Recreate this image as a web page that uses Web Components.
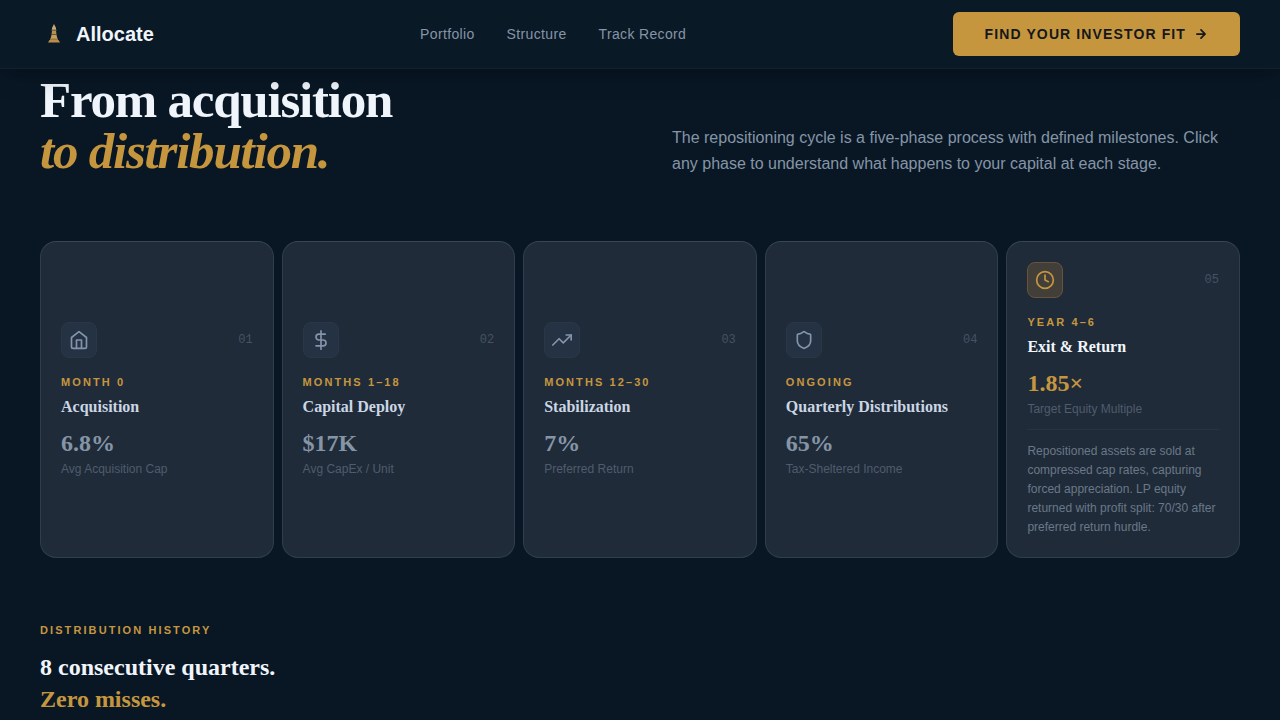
<!DOCTYPE html>
<html lang="en">
<head>
<meta charset="utf-8">
<meta name="viewport" content="width=device-width, initial-scale=1">
<title>Allocate</title>
<style>
  :root {
    --bg:#091725;
    --gold:#c6963f;
    --white:#f0f5fb;
    --text:#8595a6;
    --muted:#4f5c6c;
    --line:#303d4c;
    --sans:"Liberation Sans", Arial, sans-serif;
    --serif:"Liberation Serif", "Times New Roman", serif;
    --mono:"Liberation Mono", "Courier New", monospace;
  }
  body {
    margin:0;
    background:var(--bg);
    color:var(--text);
    font-family:var(--sans);
  }
  main {
    padding:6px 40px 0;
  }
</style>
</head>
<body>

<site-header>
  <nav-link href="#portfolio">Portfolio</nav-link>
  <nav-link href="#structure">Structure</nav-link>
  <nav-link href="#track-record">Track Record</nav-link>
  <cta-button slot="action">FIND YOUR INVESTOR FIT</cta-button>
</site-header>

<main>
  <section-intro>
    From acquisition
    <span slot="accent">to distribution.</span>
    <span slot="text">The repositioning cycle is a five-phase process with defined milestones. Click any phase to understand what happens to your capital at each stage.</span>
  </section-intro>

  <phase-list>
    <phase-card icon="home" number="01" period="MONTH 0" name="Acquisition" value="6.8%" caption="Avg Acquisition Cap">Properties are sourced off-market and closed below replacement cost.</phase-card>
    <phase-card icon="dollar" number="02" period="MONTHS 1–18" name="Capital Deploy" value="$17K" caption="Avg CapEx / Unit">Renovation capital is deployed unit by unit.</phase-card>
    <phase-card icon="trend" number="03" period="MONTHS 12–30" name="Stabilization" value="7%" caption="Preferred Return">Occupancy and rents settle at their target level.</phase-card>
    <phase-card icon="shield" number="04" period="ONGOING" name="Quarterly Distributions" value="65%" caption="Tax-Sheltered Income">Cash flow is paid out every quarter.</phase-card>
    <phase-card active icon="clock" number="05" period="YEAR 4–6" name="Exit &amp; Return" value="1.85×" caption="Target Equity Multiple">Repositioned assets are sold at compressed cap rates, capturing forced appreciation. LP equity returned with profit split: 70/30 after preferred return hurdle.</phase-card>
  </phase-list>

  <history-heading>
    <span slot="label">DISTRIBUTION HISTORY</span>
    8 consecutive quarters.
    <span slot="accent">Zero misses.</span>
  </history-heading>
</main>

<script>
const define = (name, html, setup) => {
  customElements.define(name, class extends HTMLElement {
    connectedCallback() {
      if (this.shadowRoot) return;
      const shadow = this.attachShadow({mode: 'open'});
      shadow.innerHTML = `<style>* { box-sizing:border-box; margin:0; }</style>` + html;
      if (setup) setup(this, shadow);
    }
  });
};

define('brand-logo', //html
`
  <style>
    :host { display:block; }
    a {
      display:flex;
      align-items:center;
      gap:8px;
      color:var(--white);
      font:700 20px/28px var(--sans);
      text-decoration:none;
    }
    svg { display:block; }
  </style>
  <a href="#">
    <svg width="28" height="28" viewBox="0 0 28 28" aria-hidden="true">
      <path d="M14 4l2 4v2h-4V8z" fill="#c9a970"/>
      <path d="M11.5 9.500h5v1.5h-5z" fill="#6d6558"/>
      <path d="M12 11h4l.5 3.500h-5z" fill="#b78f4f"/>
      <path d="M11.5 14h5v1.2h-5z" fill="#5b5850"/>
      <path d="M11.500 15h5l1 4h-7z" fill="#c79e5c"/>
      <path d="M10 18.500h8v1.500h-8z" fill="#96783f"/>
      <path d="M9.500 20h9l1.500 2.500H8z" fill="#b98d4b"/>
    </svg>
    <span>Allocate</span>
  </a>
`);

define('nav-link', //html
`
  <style>
    :host { display:block; }
    a {
      color:var(--text);
      font:14px/20px var(--sans);
      letter-spacing:.025em;
      text-decoration:none;
    }
    a:hover { color:var(--white); }
  </style>
  <a><slot></slot></a>
`, (el, shadow) => {
  shadow.querySelector('a').href = el.getAttribute('href');
});

define('cta-button', //html
`
  <style>
    :host { display:block; }
    button {
      display:flex;
      align-items:center;
      gap:8px;
      padding:12px 32px;
      border:0;
      border-radius:6px;
      background:var(--gold);
      color:#14181c;
      font:700 14px/20px var(--sans);
      letter-spacing:.08em;
      white-space:nowrap;
      cursor:pointer;
    }
  </style>
  <button type="button">
    <slot></slot>
    <svg width="14" height="14" viewBox="0 0 24 24" fill="none" stroke="currentColor" stroke-width="3" stroke-linecap="round" stroke-linejoin="round" aria-hidden="true"><path d="M5 12h14M12 5l7 7-7 7"/></svg>
  </button>
`);

define('site-header', //html
`
  <style>
    :host {
      display:flex;
      align-items:center;
      justify-content:space-between;
      position:sticky;
      top:0;
      z-index:1;
      padding:12px 40px;
      border-bottom:1px solid #121f2c;
      background:#0a1926;
      box-shadow:0 4px 24px rgba(0, 0, 0, .35);
    }
    nav {
      display:flex;
      gap:32px;
    }
  </style>
  <brand-logo></brand-logo>
  <nav><slot></slot></nav>
  <slot name="action"></slot>
`);

define('section-intro', //html
`
  <style>
    :host {
      display:grid;
      grid-template-columns:1fr 1fr;
      align-items:end;
      gap:64px;
      margin-bottom:64px;
    }
    h2 {
      color:var(--white);
      font:700 51px/51px var(--serif);
      letter-spacing:-.024em;
    }
    em {
      display:block;
      color:var(--gold);
    }
    p { font:16px/26px var(--sans); }
  </style>
  <h2><slot></slot><em><slot name="accent"></slot></em></h2>
  <p><slot name="text"></slot></p>
`);

define('phase-list', //html
`
  <style>
    :host {
      display:grid;
      grid-template-columns:repeat(5, 1fr);
      gap:8px;
      margin-bottom:64px;
    }
  </style>
  <slot></slot>
`, el => {
  el.addEventListener('phase-select', e => {
    for (const card of el.children) card.toggleAttribute('active', card === e.target);
  });
});

const icons = {
  home: '<path d="M3 9l9-7 9 7v11a2 2 0 0 1-2 2H5a2 2 0 0 1-2-2z"/><path d="M9 22V12h6v10"/>',
  dollar: '<path d="M12 1v22"/><path d="M17 5H9.500a3.500 3.500 0 0 0 0 7h5a3.500 3.500 0 0 1 0 7H6"/>',
  trend: '<path d="M23 6l-9.500 9.500-5-5L1 18"/><path d="M17 6h6v6"/>',
  shield: '<path d="M20 13c0 5-3.500 7.500-7.660 8.950a1 1 0 0 1-.670-.010C7.500 20.500 4 18 4 13V6a1 1 0 0 1 1-1c2 0 4.500-1.200 6.240-2.720a1.170 1.170 0 0 1 1.520 0C14.510 3.810 17 5 19 5a1 1 0 0 1 1 1z"/>',
  clock: '<circle cx="12" cy="12" r="10"/><path d="M12 6v6l4 2"/>'
};

define('phase-card', //html
`
  <style>
    :host { display:grid; }
    button {
      width:100%;
      padding:20px;
      border:1px solid var(--line);
      border-top-color:#384554;
      border-radius:16px;
      background:#1f2b39;
      color:var(--muted);
      font:12px/18px var(--sans);
      text-align:left;
      cursor:pointer;
    }
    span { display:block; }
    .top {
      display:flex;
      align-items:center;
      justify-content:space-between;
      margin-bottom:16px;
    }
    .icon {
      display:grid;
      place-items:center;
      width:36px;
      height:36px;
      border:1px solid #2a3746;
      border-radius:8px;
      background:#253243;
      color:#8594ac;
    }
    .number {
      color:#455262;
      font-family:var(--mono);
    }
    .period {
      margin-bottom:7px;
      color:var(--gold);
      font-size:11px;
      font-weight:700;
      line-height:16px;
      letter-spacing:.19em;
    }
    .name {
      margin-bottom:14px;
      color:#cbd6e4;
      font:700 16px/20px var(--serif);
    }
    .value {
      margin-bottom:5px;
      color:#8595a6;
      font:700 24px/24px var(--serif);
    }
    .detail {
      display:none;
      margin-top:11px;
      padding-top:12px;
      border-top:1px solid #273443;
      color:#6a7888;
      line-height:19px;
    }
    :host([active]) .icon {
      border-color:#665539;
      background:#423e39;
      color:var(--gold);
    }
    :host([active]) .name { color:var(--white); }
    :host([active]) .value { color:var(--gold); }
    :host([active]) .detail { display:block; }
  </style>
  <button type="button">
    <span class="top"><span class="icon"></span><span class="number"></span></span>
    <span class="period"></span>
    <span class="name"></span>
    <span class="value"></span>
    <span class="caption"></span>
    <span class="detail"><slot></slot></span>
  </button>
`, (el, shadow) => {
  for (const key of ['number', 'period', 'name', 'value', 'caption']) {
    shadow.querySelector('.' + key).textContent = el.getAttribute(key);
  }
  shadow.querySelector('.icon').innerHTML =
    `<svg width="20" height="20" viewBox="0 0 24 24" fill="none" stroke="currentColor" stroke-width="2" stroke-linecap="round" stroke-linejoin="round" aria-hidden="true">${icons[el.getAttribute('icon')]}</svg>`;
  shadow.querySelector('button').addEventListener('click', () => {
    el.dispatchEvent(new CustomEvent('phase-select', {bubbles: true}));
  });
});

define('history-heading', //html
`
  <style>
    :host { display:block; }
    p {
      margin-bottom:13px;
      color:var(--gold);
      font:700 11px/16px var(--sans);
      letter-spacing:.19em;
    }
    h3 {
      color:var(--white);
      font:700 24px/32px var(--serif);
    }
    h3 span {
      display:block;
      color:var(--gold);
    }
  </style>
  <p><slot name="label"></slot></p>
  <h3><slot></slot><span><slot name="accent"></slot></span></h3>
`);
</script>
</body>
</html>
